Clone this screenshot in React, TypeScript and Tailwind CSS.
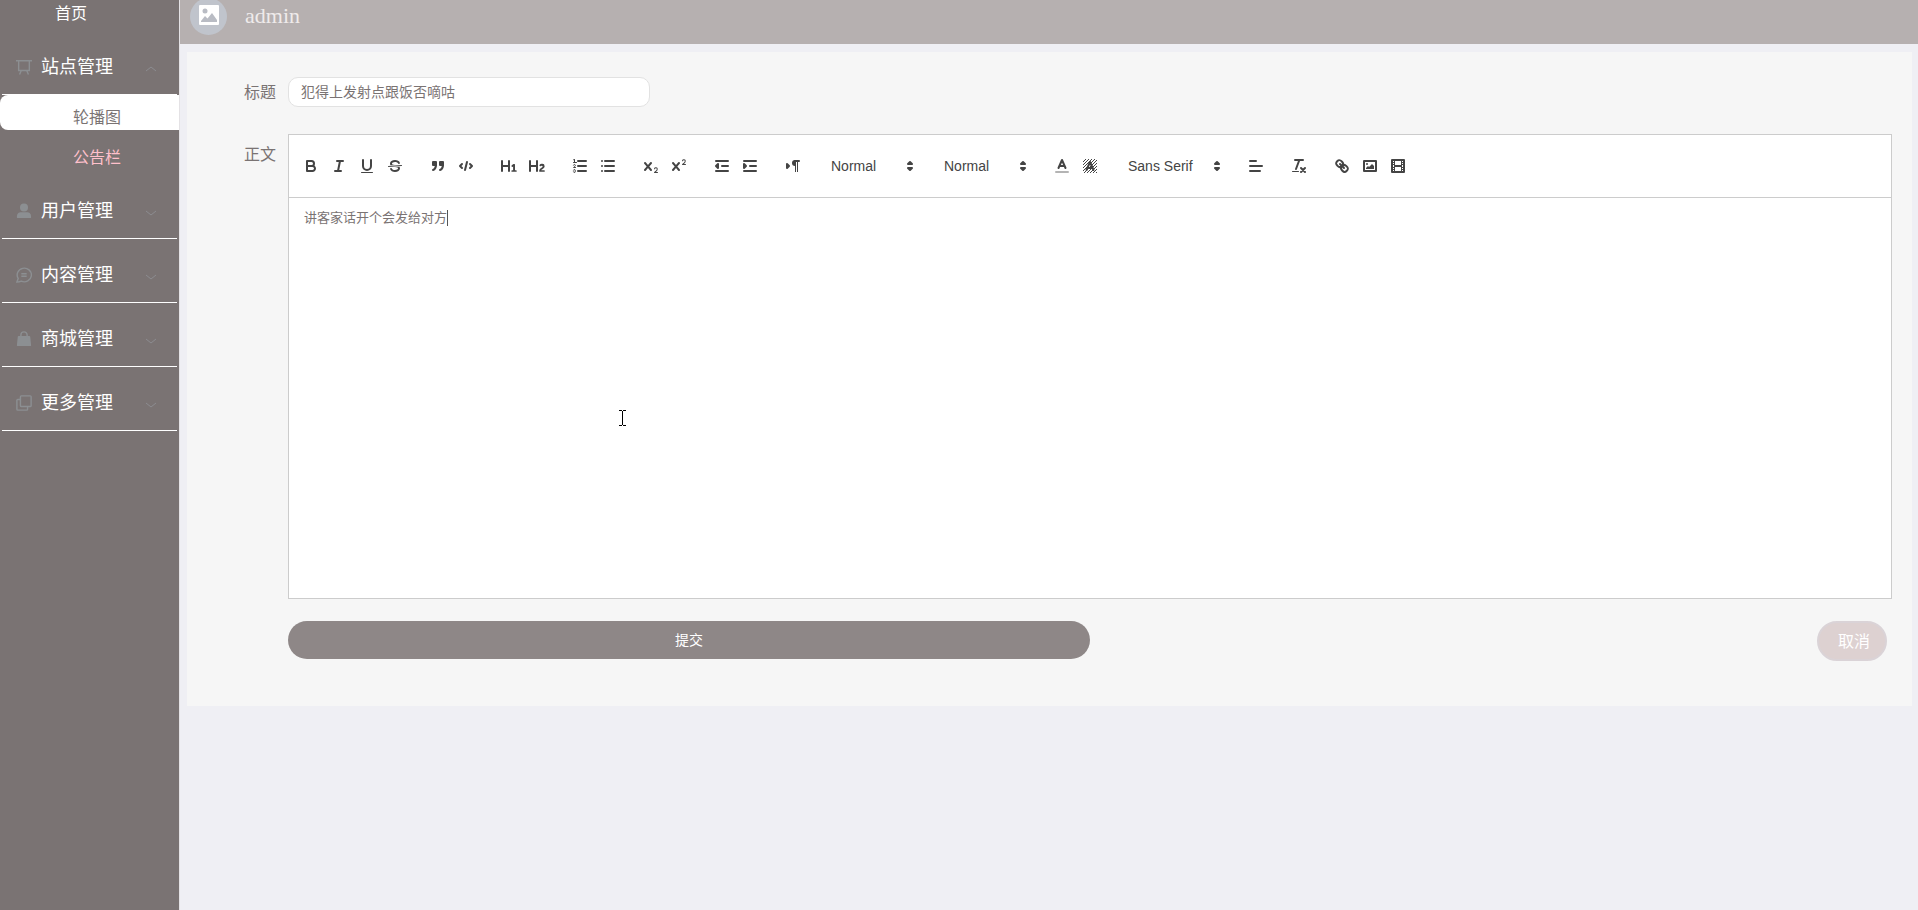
import { useState } from "react";
import type { ReactNode } from "react";

/* ===== TOOLBAR ICONS ===== */

const CROSS =
  "M9.65,5.241a1,1,0,0,0-1.409.108L6,7.964,3.759,5.349A1,1,0,0,0,2.192,6.592Q2.215,6.621,2.241,6.649L4.684,9.5,2.241,12.35A1,1,0,0,0,3.71,13.707q.026-.028.049-.057L6,11.036,8.241,13.65a1,1,0,1,0,1.567-1.243Q9.785,12.378,9.759,12.35L7.316,9.5,9.759,6.651A1,1,0,0,0,9.65,5.241Z";

const fill = { fill: "#444", stroke: "none" };
const solid = { fill: "#444" };

const icons: Record<string, ReactNode> = {
  bold: (
    <>
      <path d="M5,4H9.5A2.5,2.5,0,0,1,12,6.5v0A2.5,2.5,0,0,1,9.5,9H5Z" />
      <path d="M5,9h5.5A2.5,2.5,0,0,1,13,11.5v0A2.5,2.5,0,0,1,10.5,14H5Z" />
    </>
  ),
  italic: <path d="M7,4H13M5,14H11M8,14L10,4" />,
  underline: (
    <>
      <path d="M5,3V9a4.012,4.012,0,0,0,4,4H9a4.012,4.012,0,0,0,4-4V3" />
      <rect {...fill} x="3" y="15" width="12" height="1" rx="0.5" />
    </>
  ),
  strike: (
    <>
      <path strokeWidth="1" d="M15.5,8.5L2.5,9.5" />
      <path
        {...fill}
        d="M9.007,8C6.542,7.791,6,7.519,6,6.5,6,5.792,7.283,5,9,5c1.571,0,2.765.679,2.969,1.309a1,1,0,0,0,1.9-.617C13.356,4.106,11.354,3,9,3,6.2,3,4,4.538,4,6.5a3.2,3.2,0,0,0,.5,1.843Z"
      />
      <path
        {...fill}
        d="M8.984,10C11.457,10.208,12,10.479,12,11.5c0,0.708-1.283,1.5-3,1.5-1.571,0-2.765-.679-2.969-1.309a1,1,0,1,0-1.9.617C4.644,13.894,6.646,15,9,15c2.8,0,5-1.538,5-3.5a3.2,3.2,0,0,0-.5-1.843Z"
      />
    </>
  ),
  quote: (
    <>
      <rect {...solid} x="4" y="5" width="3" height="3" />
      <rect {...solid} x="11" y="5" width="3" height="3" />
      <path {...solid} d="M7,8c0,4.031-3,5-3,5" />
      <path {...solid} d="M14,8c0,4.031-3,5-3,5" />
    </>
  ),
  code: <path d="M5,7L3,9L5,11M13,7L15,9L13,11M10,5L8,13" />,
  h1: (
    <path
      {...fill}
      d="M10,4V14a1,1,0,0,1-2,0V10H3v4a1,1,0,0,1-2,0V4A1,1,0,0,1,3,4V8H8V4a1,1,0,0,1,2,0Zm6.068,9.209H14.99V7.599a.541.541,0,0,0-.605-.605h-.627a1.011,1.011,0,0,0-.748.297L11.645,8.566a.543.543,0,0,0-.022.858l.286.308a.539.539,0,0,0,.847.033l.099-.088a1.214,1.214,0,0,0,.242-.353h.022s-.011.309-.011.605V13.209H12.041a.541.541,0,0,0-.605.605v.439a.541.541,0,0,0,.605.605h4.027a.541.541,0,0,0,.605-.605v-.439A.541.541,0,0,0,16.068,13.209Z"
    />
  ),
  h2: (
    <path
      {...fill}
      d="M16.74,13.814v.439a.541.541,0,0,1-.605.605H11.855a.584.584,0,0,1-.649-.605V14.013c0-2.905,3.399-3.422,3.399-4.555a.777.777,0,0,0-.847-.781,1.177,1.177,0,0,0-.836.385c-.275.264-.561.374-.858.132l-.429-.341c-.308-.242-.385-.518-.154-.814a2.972,2.972,0,0,1,2.454-1.177,2.454,2.454,0,0,1,2.684,2.409c0,2.453-3.179,2.927-3.278,3.938h2.794A.541.541,0,0,1,16.74,13.814ZM9,3A1,1,0,0,0,8,4V8H3V4A1,1,0,0,0,1,4V14a1,1,0,0,0,2,0V10H8v4a1,1,0,0,0,2,0V4A1,1,0,0,0,9,3Z"
    />
  ),
  ordered: (
    <>
      <path d="M7,4H15M7,9H15M7,14H15" />
      <path strokeWidth="1" d="M2.5,5.5H5.5" />
      <path
        {...fill}
        d="M3.5,6A0.5,0.5,0,0,1,3,5.5V3.085l-0.276.138A0.5,0.5,0,0,1,2.053,3c-0.124-.247-0.023-0.324.224-0.447l1-.5A0.5,0.5,0,0,1,4,2.5v3A0.5,0.5,0,0,1,3.5,6Z"
      />
      <path
        strokeWidth="1"
        d="M4.5,10.5h-2c0-.234,1.85-1.076,1.85-2.234A0.959,0.959,0,0,0,2.5,8.156"
      />
      <path
        strokeWidth="1"
        d="M2.5,14.846a0.959,0.959,0,0,0,1.85-.109A0.7,0.7,0,0,0,3.75,14a0.688,0.688,0,0,0,.6-0.736,0.959,0.959,0,0,0-1.85-.109"
      />
    </>
  ),
  bullet: (
    <>
      <path d="M6,4H15M6,9H15M6,14H15" />
      <path d="M3,4H3M3,9H3M3,14H3" />
    </>
  ),
  sub: (
    <>
      <path
        {...fill}
        d="M15.5,15H13.861a3.858,3.858,0,0,0,1.914-2.975,1.8,1.8,0,0,0-1.6-1.751A1.921,1.921,0,0,0,12.021,11.7a.5.5,0,1,0,.957.291h0a.914.914,0,0,1,1.053-.725.81.81,0,0,1,.744.762c0,1.076-1.17,1.87-1.94,2.431A1.456,1.456,0,0,0,12,15.5a.5.5,0,0,0,.5.5h3A.5.5,0,0,0,15.5,15Z"
      />
      <path {...fill} d={CROSS} />
    </>
  ),
  sup: (
    <>
      <path
        {...fill}
        d="M15.5,7H13.861a4.015,4.015,0,0,0,1.914-2.975,1.8,1.8,0,0,0-1.6-1.751A1.922,1.922,0,0,0,12.021,3.7a.5.5,0,1,0,.957.291.917.917,0,0,1,1.053-.725.81.81,0,0,1,.744.762c0,1.077-1.164,1.925-1.934,2.486A1.423,1.423,0,0,0,12,7.5a.5.5,0,0,0,.5.5h3A.5.5,0,0,0,15.5,7Z"
      />
      <path {...fill} d={CROSS} />
    </>
  ),
  outdent: (
    <>
      <path d="M3,14H15M3,4H15M9,9H15" />
      <path {...solid} d="M5,7V11L3,9Z" />
    </>
  ),
  indent: (
    <>
      <path d="M3,14H15M3,4H15M9,9H15" />
      <path {...solid} d="M3,7V11L5,9Z" />
    </>
  ),
  direction: (
    <>
      <path {...solid} d="M3,11L5,9L3,7Z" />
      <path d="M15,4H11" />
      <path {...fill} d="M11,3a3,3,0,0,0,0,6h1V3H11Z" />
      <rect {...fill} x="11" y="4" width="1" height="11" />
      <rect {...fill} x="13" y="4" width="1" height="11" />
    </>
  ),
  color: (
    <>
      <path opacity="0.4" d="M3,15H15" />
      <path d="M5.5,11L9,3L12.5,11M11.63,9H6.38" />
    </>
  ),
  background: (
    <>
      <path
        strokeWidth="1"
        strokeLinecap="butt"
        shapeRendering="crispEdges"
        d="M2,5L5,2M2,8L8,2M2,11L11,2M2,14L14,2M3,16L16,3M6,16L16,6M9,16L16,9M12,16L16,12M15,16L16,15"
      />
      <path d="M5.5,13L9,5L12.5,13M11.63,11H6.38" />
    </>
  ),
  align: <path d="M3,4H9M3,9H15M3,14H13" />,
  clean: (
    <>
      <path d="M5,3H13M6,12L9.35,3M11,11L15,15M15,11L11,15" />
      <rect {...fill} x="2" y="14" width="7" height="1" rx="0.5" />
    </>
  ),
  link: (
    <>
      <path d="M7,7L11,11" />
      <path d="M8.9,4.577a3.476,3.476,0,0,1,.36,4.679A3.476,3.476,0,0,1,4.577,8.9C3.185,7.5,2.035,6.4,4.217,4.217S7.5,3.185,8.9,4.577Z" />
      <path d="M13.423,9.1a3.476,3.476,0,0,0-4.679-.36,3.476,3.476,0,0,0,.36,4.679c1.392,1.392,2.5,2.542,4.679.36S14.815,10.5,13.423,9.1Z" />
    </>
  ),
  image: (
    <>
      <rect x="3" y="4" width="12" height="10" />
      <circle {...fill} cx="6" cy="7" r="1" />
      <path {...fill} d="M5,12V11L7,9L8,10L11,7L13,9V12Z" />
    </>
  ),
  video: (
    <>
      <rect x="3" y="3" width="12" height="12" />
      <path
        {...fill}
        d="M5,3h1v12h-1ZM12,3h1v12h-1ZM5,8h8v2h-8ZM3,5h3v1h-3ZM3,7h3v1h-3ZM3,10h3v1h-3ZM3,12h3v1h-3ZM12,5h3v1h-3ZM12,7h3v1h-3ZM12,10h3v1h-3ZM12,12h3v1h-3Z"
      />
    </>
  ),
};

function ToolIcon({ children }: { children: ReactNode }) {
  return (
    <svg
      viewBox="0 0 18 18"
      className="h-[18px] w-[18px]"
      fill="none"
      stroke="#444"
      strokeWidth="2"
      strokeLinecap="round"
      strokeLinejoin="round"
      aria-hidden="true"
    >
      {children}
    </svg>
  );
}

function ToolGroup({ names }: { names: string[] }) {
  return (
    <div className="flex">
      {names.map((name) => (
        <button
          key={name}
          type="button"
          aria-label={name}
          className="h-6 w-7 px-[5px] py-[3px]"
        >
          <ToolIcon>{icons[name]}</ToolIcon>
        </button>
      ))}
    </div>
  );
}

function Picker({
  label,
  options,
  wide,
}: {
  label: string;
  options: string[];
  wide?: boolean;
}) {
  return (
    <div className={wide ? "relative w-[108px]" : "relative w-[98px]"}>
      <select
        aria-label={label}
        className="h-6 w-full appearance-none bg-transparent pl-[9px] text-sm font-medium text-[#444] outline-none"
      >
        {options.map((option) => (
          <option key={option}>{option}</option>
        ))}
      </select>
      <div className="pointer-events-none absolute top-[3px] right-px">
        <ToolIcon>
          <path {...solid} d="M7,11L9,13L11,11ZM7,7L9,5L11,7Z" />
        </ToolIcon>
      </div>
    </div>
  );
}

/* ===== SIDEBAR ===== */

const menuIcons: Record<string, ReactNode> = {
  board: <path d="M0,2H18M3,2V13H15V2M6,13L4,17.500M12,13L14,17.500" />,
  user: (
    <g fill="currentColor" stroke="none">
      <circle cx="9" cy="5" r="4.500" />
      <path d="M1,16c0-4,2-5.500,5-5.500h6c3,0,5,1.500,5,5.500q0,1-1,1H2q-1,0-1-1Z" />
    </g>
  ),
  chat: (
    <>
      <path d="M1,17L2.500,13A8,7.700,0,1,1,6,16Q4,17,1,17Z" />
      <path d="M6,7.500H12M6,10.500H12" />
    </>
  ),
  bag: (
    <>
      <path
        fill="currentColor"
        stroke="none"
        d="M3,5.500H15q1,0,1,1L17,16q0,1-1,1H2q-1,0-1-1L2,6.500q0-1,1-1Z"
      />
      <path d="M5.500,7V4.500a3.500,3.500,0,0,1,7,0V7" />
    </>
  ),
  copy: (
    <>
      <rect x="5" y="1" width="12" height="12" rx="1" />
      <path d="M5,5H2q-1,0-1,1V16q0,1,1,1H12q1,0,1-1V13" />
    </>
  ),
};

interface MenuItem {
  title: string;
  icon: string;
  children?: string[];
}

const menu: MenuItem[] = [
  { title: "站点管理", icon: "board", children: ["轮播图", "公告栏"] },
  { title: "用户管理", icon: "user" },
  { title: "内容管理", icon: "chat" },
  { title: "商城管理", icon: "bag" },
  { title: "更多管理", icon: "copy" },
];

function Sidebar() {
  return (
    <aside className="w-[179px] shrink-0 bg-[#7a7373]">
      <nav>
        <a
          href="#home"
          className="block h-[31px] pl-[55px] text-base leading-7 text-white"
        >
          首页
        </a>
        <ul>
          {menu.map((item) => (
            <li key={item.title}>
              <button
                type="button"
                aria-expanded={Boolean(item.children)}
                className="mx-auto flex h-16 w-[175px] items-center border-b border-white pt-2 pr-5 pl-3.5 text-lg text-white"
              >
                <svg
                  viewBox="0 0 18 18"
                  className="h-4 w-4 text-[#8c8f92]"
                  fill="none"
                  stroke="currentColor"
                  strokeWidth="1.6"
                  aria-hidden="true"
                >
                  {menuIcons[item.icon]}
                </svg>
                <span className="ml-[9px]">{item.title}</span>
                <svg
                  viewBox="0 0 12 12"
                  className="mt-1 ml-auto h-3 w-3 text-[#8c8c90]"
                  fill="none"
                  stroke="currentColor"
                  aria-hidden="true"
                >
                  <path d={item.children ? "M1,8L6,4L11,8" : "M1,4L6,8L11,4"} />
                </svg>
              </button>
              {item.children && (
                <ul>
                  {item.children.map((child, i) => (
                    <li key={child} className="h-10">
                      <a
                        href="#notice"
                        className={
                          i === 0
                            ? "block h-[35px] rounded-l-lg bg-white pt-2 pl-[73px] text-base leading-[30px] text-[#7a7373]"
                            : "block h-[35px] pt-2 pl-[73px] text-base leading-[30px] text-[#ffc0cb]"
                        }
                      >
                        {child}
                      </a>
                    </li>
                  ))}
                </ul>
              )}
            </li>
          ))}
        </ul>
      </nav>
    </aside>
  );
}

/* ===== PAGE ===== */

export default function App() {
  const [title, setTitle] = useState("犯得上发射点跟饭否嘀咕");
  const [content, setContent] = useState("讲客家话开个会发给对方");

  return (
    <div className="flex min-h-screen bg-[#efeff4] font-['Liberation_Sans','Noto_Sans_CJK_SC',sans-serif] text-[#7a7373]">
      <Sidebar />

      <div className="min-w-0 flex-1 border-l border-[#e4e2e5]">
        {/* HEADER */}
        <header className="flex h-11 items-start bg-[#b6b0b0] pl-2.5">
          <div className="-mt-0.5 flex h-[37px] w-[37px] items-center justify-center rounded-full bg-[#c0c4cc] pb-1">
            <svg viewBox="0 0 20 20" className="h-5 w-5" aria-hidden="true">
              <rect width="20" height="20" rx="1" fill="#fff" />
              <circle cx="6" cy="6" r="2.500" fill="#b9bcc4" />
              <path
                d="M2,17V16L6,11L8.500,13.500L13,8L18,15V17Z"
                fill="#b9bcc4"
              />
            </svg>
          </div>
          <span className="ml-[18px] font-['Liberation_Serif',serif] text-[22px] leading-8 text-[#efebeb]">
            admin
          </span>
        </header>

        {/* FORM */}
        <main className="mt-2 mr-1.5 ml-[7px] bg-[#f6f6f6] pt-[25px] pr-5 pb-[45px] pl-[57px]">
          <form>
            <div className="flex items-center">
              <label htmlFor="title" className="w-11 pt-0.5 text-base">
                标题
              </label>
              <input
                id="title"
                value={title}
                onChange={(e) => setTitle(e.target.value)}
                className="h-[30px] w-[362px] rounded-[10px] border border-[#e2e2e2] bg-white px-3 pb-0.5 text-sm outline-none"
              />
            </div>

            <div className="mt-[27px] flex">
              <label htmlFor="content" className="w-11 shrink-0 pt-[9px] text-base">
                正文
              </label>
              <div className="min-w-0 flex-1">
                <div className="border border-[#ccc] bg-white">
                  <div className="flex h-[63px] flex-wrap items-center gap-[15px] border-b border-[#ccc] px-2">
                    <ToolGroup names={["bold", "italic", "underline", "strike"]} />
                    <ToolGroup names={["quote", "code"]} />
                    <ToolGroup names={["h1", "h2"]} />
                    <ToolGroup names={["ordered", "bullet"]} />
                    <ToolGroup names={["sub", "sup"]} />
                    <ToolGroup names={["outdent", "indent"]} />
                    <ToolGroup names={["direction"]} />
                    <Picker label="Size" options={["Normal", "Small", "Large", "Huge"]} />
                    <Picker label="Heading" options={["Normal", "Heading 1", "Heading 2"]} />
                    <ToolGroup names={["color", "background"]} />
                    <Picker label="Font" options={["Sans Serif", "Serif", "Monospace"]} wide />
                    <ToolGroup names={["align"]} />
                    <ToolGroup names={["clean"]} />
                    <ToolGroup names={["link", "image", "video"]} />
                  </div>
                  <div className="relative">
                    <textarea
                      id="content"
                      value={content}
                      onChange={(e) => setContent(e.target.value)}
                      className="block h-[400px] w-full resize-none bg-transparent px-[15px] py-[11px] text-[13px] leading-[18px] outline-none"
                    />
                    {/* caret */}
                    <span className="absolute top-3 left-[158px] h-4 w-px bg-[#555]" />
                    {/* mouse pointer */}
                    <svg
                      viewBox="0 0 7 16"
                      className="absolute top-[212px] left-[330px] h-4 w-[7px]"
                      fill="none"
                      stroke="#000"
                      aria-hidden="true"
                    >
                      <path d="M0,.5H3M4,.5H7M3.500,1V15M0,15.500H3M4,15.500H7" />
                    </svg>
                  </div>
                </div>

                <div className="mt-[22px] flex items-start justify-between">
                  <button
                    type="submit"
                    className="h-[38px] w-1/2 rounded-full bg-[#8e8787] text-sm text-white"
                  >
                    提交
                  </button>
                  <button
                    type="button"
                    className="mr-[5px] h-10 w-[70px] rounded-full border-2 border-[#dad3d7] bg-[#ddd1d1] pt-0.5 pl-1 text-base text-white"
                  >
                    取消
                  </button>
                </div>
              </div>
            </div>
          </form>
        </main>
      </div>
    </div>
  );
}
